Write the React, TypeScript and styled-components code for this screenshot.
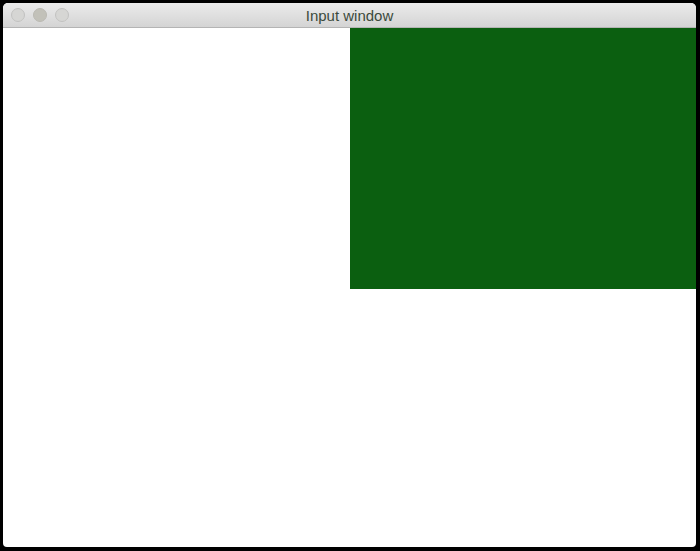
import React from 'react';
import styled, { createGlobalStyle } from 'styled-components';

const Global = createGlobalStyle`
  html, body {
    margin: 0;
    padding: 0;
    background: #000;
  }
  body {
    width: 700px;
    height: 551px;
    overflow: hidden;
  }
`;

const Screen = styled.div`
  width: 700px;
  height: 551px;
  box-sizing: border-box;
  padding: 3px 4px 4px 3px;
  display: flex;
`;

const Window = styled.div`
  flex: 1;
  display: flex;
  flex-direction: column;
  border-radius: 5px 5px 4px 4px;
  overflow: hidden;
  background: #fff;
`;

const TitleBar = styled.div`
  height: 24px;
  flex-shrink: 0;
  position: relative;
  display: flex;
  align-items: center;
  justify-content: center;
  background: linear-gradient(#ebebeb, #d4d4d4);
  border-bottom: 1px solid #b4b4b4;
`;

const Lights = styled.div`
  position: absolute;
  left: 8px;
  top: 5px;
  display: flex;
  gap: 8px;
`;

const Light = styled.span<{ $filled?: boolean }>`
  width: 14px;
  height: 14px;
  border-radius: 50%;
  box-sizing: border-box;
  background: ${(p) => (p.$filled ? '#c2c1b9' : '#d6d6d4')};
  border: 1px solid ${(p) => (p.$filled ? '#bab9b2' : '#c2c2c0')};
`;

const Title = styled.span`
  font-family: 'Liberation Sans', Arial, sans-serif;
  font-size: 15px;
  color: #3b4a3c;
`;

const Content = styled.div`
  flex: 1;
  display: grid;
  grid-template-columns: 347px 1fr;
  grid-template-rows: 261px 1fr;
`;

const GreenPanel = styled.div`
  grid-column: 2;
  grid-row: 1;
  background: #0b5f10;
`;

export default function App() {
  return (
    <>
      <Global />
      <Screen>
        <Window>
          <TitleBar>
            <Lights>
              <Light />
              <Light $filled />
              <Light />
            </Lights>
            <Title>Input window</Title>
          </TitleBar>
          <Content>
            <GreenPanel />
          </Content>
        </Window>
      </Screen>
    </>
  );
}
